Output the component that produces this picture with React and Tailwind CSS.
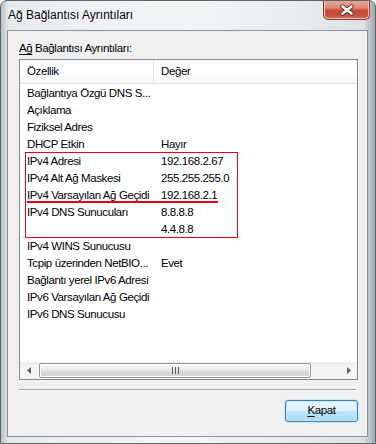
import React from "react";

const rows = [
  ["Bağlantıya Özgü DNS S...", ""],
  ["Açıklama", ""],
  ["Fiziksel Adres", ""],
  ["DHCP Etkin", "Hayır"],
  ["IPv4 Adresi", "192.168.2.67"],
  ["IPv4 Alt Ağ Maskesi", "255.255.255.0"],
  ["IPv4 Varsayılan Ağ Geçidi", "192.168.2.1"],
  ["IPv4 DNS Sunucuları", "8.8.8.8"],
  ["", "4.4.8.8"],
  ["IPv4 WINS Sunucusu", ""],
  ["Tcpip üzerinden NetBIO...", "Evet"],
  ["Bağlantı yerel IPv6 Adresi", ""],
  ["IPv6 Varsayılan Ağ Geçidi", ""],
  ["IPv6 DNS Sunucusu", ""],
];

export default function App() {
  return (
    <div
      className="w-[376px] h-[444px] flex flex-col overflow-hidden rounded-t-[7px] border border-[#5a6570] bg-[linear-gradient(90deg,#b9c0c7_0%,#e6e9ec_2%,#eef0f2_20%,#f3f4f5_50%,#e9ebee_80%,#dde1e5_97%,#9ea6ae_100%)] text-black"
      style={{ fontFamily: '"Liberation Sans", Arial, sans-serif' }}
    >
      {/* Title bar */}
      <div className="h-[29px] flex items-start justify-between shrink-0">
        <div className="pl-[7px] pt-[7px] text-[12px] leading-[15px] [text-shadow:0_0_6px_#ffffff,0_0_3px_#ffffff]">
          Ağ Bağlantısı Ayrıntıları
        </div>
        <CloseButton />
      </div>

      {/* Client area */}
      <div className="flex-1 ml-[6px] mr-[7px] mb-[6px] border border-[#8a939c] bg-[#f0f0f0] flex flex-col text-[11.5px] tracking-[-0.4px]">
        <div className="pl-[11px] pt-[9px] h-[28px] leading-[16px]">
          <span className="underline underline-offset-[2px]">Ağ</span> Bağlantısı Ayrıntıları:
        </div>

        {/* List view */}
        <div className="ml-[11px] mr-[9px] h-[321px] border border-[#828790] bg-white flex flex-col relative">
          <div className="h-[24px] flex border-b border-[#e2e3e5] bg-[linear-gradient(180deg,#ffffff_0%,#ffffff_55%,#f5f6f7_100%)] shrink-0">
            <div className="w-[134px] pl-[7px] flex items-center border-r border-[#e2e3e5]">Özellik</div>
            <div className="pl-[7px] flex items-center">Değer</div>
          </div>
          <div className="pt-[1px]">
            {rows.map(([k, v], i) => (
              <div key={i} className="h-[17px] flex items-center whitespace-nowrap">
                <div className="w-[134px] pl-[7px]">{k}</div>
                <div className="pl-[7px]">{v}</div>
              </div>
            ))}
          </div>

          {/* annotations */}
          <div className="absolute left-[5px] top-[92px] w-[213px] h-[86px] border border-[#e2001a]" />
          <div className="absolute left-[7px] top-[141px] w-[191px] h-[2px] bg-[#e2001a]" />

          {/* Horizontal scroll bar */}
          <div className="mt-auto h-[17px] flex items-center bg-[linear-gradient(180deg,#e9e9e9_0%,#f5f5f5_30%,#f5f5f5_100%)]">
            <div className="w-[17px] h-[17px] flex items-center justify-center">
              <svg width="4" height="7" viewBox="0 0 4 7"><path d="M4 0 L0 3.5 L4 7 Z" fill="#606060" /></svg>
            </div>
            <div className="ml-[2px] w-[272px] h-[15px] rounded-[2px] border border-[#969696] bg-[linear-gradient(180deg,#f6f6f6_0%,#eaeaea_45%,#dadada_55%,#d4d4d4_100%)] shadow-[inset_0_0_0_1px_#fbfbfb] flex items-center justify-center gap-[2px]">
              <div className="w-[1px] h-[7px] bg-[#5a5a5a]" />
              <div className="w-[1px] h-[7px] bg-[#5a5a5a]" />
              <div className="w-[1px] h-[7px] bg-[#5a5a5a]" />
            </div>
            <div className="flex-1" />
            <div className="w-[17px] h-[17px] flex items-center justify-center">
              <svg width="4" height="7" viewBox="0 0 4 7"><path d="M0 0 L4 3.5 L0 7 Z" fill="#606060" /></svg>
            </div>
          </div>
        </div>

        {/* separator */}
        <div className="mt-[9px] ml-[11px] mr-[11px] h-[1px] bg-[#a0a0a0]" />
        <div className="ml-[11px] mr-[11px] h-[1px] bg-white" />

        {/* Button */}
        <div className="mt-[9px] flex justify-end mr-[9px]">
          <button className="w-[73px] h-[22px] rounded-[3px] border border-[#3c7fb1] bg-[linear-gradient(180deg,#eaf6fd_0%,#d9f0fc_50%,#bee6fd_51%,#a7d9f5_100%)] shadow-[inset_0_0_0_1px_#c9eafc,0_0_2px_#7fd0f7] flex items-center justify-center">
            <span className="underline underline-offset-[2px]">K</span>apat
          </button>
        </div>
      </div>
    </div>
  );
}

function CloseButton() {
  return (
    <div className="mr-[5px] -mt-[1px] w-[47px] h-[20px] rounded-b-[5px] border border-t-0 border-[#7f3a30] bg-[linear-gradient(180deg,#e9a99a_0%,#dc8a78_40%,#c94a36_55%,#c8503c_80%,#d8725f_100%)] shadow-[inset_0_0_0_1px_#f2c2b5] flex items-center justify-center">
      <svg width="16" height="12" viewBox="0 0 16 12">
        <path d="M3.5 2.5 L12.5 9.5 M12.5 2.5 L3.5 9.5" stroke="#5a2a25" strokeWidth="4.4" strokeLinecap="round" />
        <path d="M3.5 2.5 L12.5 9.5 M12.5 2.5 L3.5 9.5" stroke="#ffffff" strokeWidth="2.6" strokeLinecap="round" />
      </svg>
    </div>
  );
}
